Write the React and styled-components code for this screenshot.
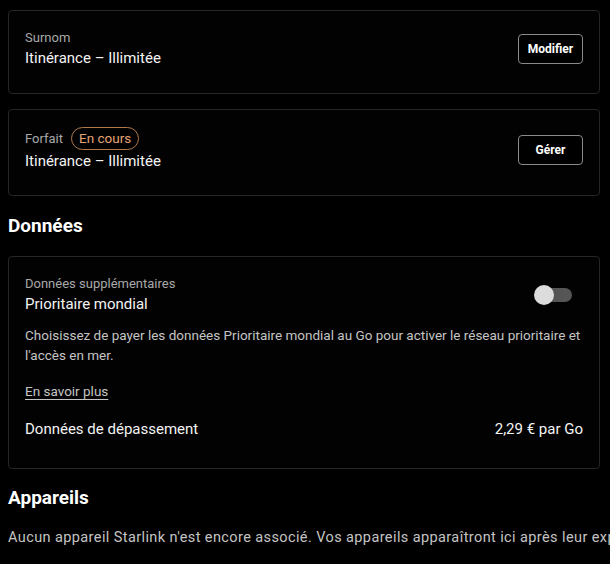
import React from 'react';
import styled, { createGlobalStyle } from 'styled-components';

const GlobalStyle = createGlobalStyle`
  html, body {
    margin: 0;
    padding: 0;
    background: #000;
  }
  body {
    font-family: Roboto, "Liberation Sans", sans-serif;
    color: #f2f2f2;
    overflow: hidden;
  }
`;

const Page = styled.div`
  width: 592px;
  padding: 10px 0 0 8px;
  display: flex;
  flex-direction: column;
`;

const Card = styled.div`
  border: 1px solid #262626;
  border-radius: 4px;
  background: #020202;
  padding: ${p => p.$pad || '16px'};
  margin: ${p => p.$m || '0 0 16px'};
`;

const Row = styled.div`
  display: flex;
  align-items: ${p => p.$align || 'center'};
  justify-content: space-between;
  min-height: ${p => p.$h || 'auto'};
  margin-top: ${p => p.$mt || '0'};
`;

const Stack = styled.div`
  display: flex;
  flex-direction: column;
`;

const Label = styled.div`
  display: flex;
  align-items: center;
  gap: 8px;
  font-size: 13px;
  color: #a8a8a8;
  min-height: ${p => p.$h || '18px'};
  line-height: 18px;
`;

const Value = styled.div`
  font-size: 15px;
  color: #f4f4f4;
  line-height: 22px;
`;

const Badge = styled.span`
  border: 1px solid #b07a4c;
  color: #e3a374;
  border-radius: 12px;
  padding: 2px 7px;
  font-size: 13.5px;
  line-height: 17px;
`;

const Button = styled.button`
  background: #000;
  border: 1px solid #8a8a8a;
  border-radius: 4px;
  color: #fff;
  font-family: inherit;
  font-weight: 700;
  font-size: 12px;
  height: 30px;
  width: 65px;
  padding: 0;
  margin-top: ${p => p.$mt || '0'};
`;

const Heading = styled.h2`
  margin: 0;
  font-size: 19px;
  font-weight: 700;
  color: #fff;
  line-height: 26px;
`;

const Toggle = styled.div`
  position: relative;
  width: 38px;
  height: 20px;
  margin-right: 11px;
  &::before {
    content: '';
    position: absolute;
    left: 6px;
    right: 0;
    top: 3px;
    height: 14px;
    border-radius: 7px;
    background: #555;
  }
  &::after {
    content: '';
    position: absolute;
    left: 0;
    top: 0;
    width: 20px;
    height: 20px;
    border-radius: 50%;
    background: #dcdcdc;
  }
`;

const Desc = styled.p`
  margin: 10px 0 0;
  font-size: 13.5px;
  line-height: 20px;
  color: #c4c4c4;
`;

const Link = styled.a`
  display: inline-block;
  margin-top: 16px;
  font-size: 13.5px;
  line-height: 20px;
  color: #c4c4c4;
  text-decoration: underline;
  text-underline-offset: 3px;
`;

const Body = styled.p`
  margin: 17px 0 0;
  font-size: 14.5px;
  letter-spacing: 0.4px;
  color: #c4c4c4;
  white-space: nowrap;
  line-height: 20px;
`;

export default function App() {
  return (
    <>
      <GlobalStyle />
      <Page>
        <Card $pad="18px 16px 24px" $m="0 0 15px">
          <Row $align="flex-start">
            <Stack>
              <Label>Surnom</Label>
              <Value>Itinérance – Illimitée</Value>
            </Stack>
            <Button $mt="5px">Modifier</Button>
          </Row>
        </Card>
        <Card $pad="17px 16px 23px" $m="0 0 17px">
          <Row $align="flex-start">
            <Stack>
              <Label $h="23px">Forfait <Badge>En cours</Badge></Label>
              <Value>Itinérance – Illimitée</Value>
            </Stack>
            <Button $mt="8px">Gérer</Button>
          </Row>
        </Card>
        <Heading>Données</Heading>
        <Card $pad="18px 16px 19px" $m="17px 0 16px">
          <Row>
            <Stack>
              <Label>Données supplémentaires</Label>
              <Value>Prioritaire mondial</Value>
            </Stack>
            <Toggle />
          </Row>
          <Desc>
            Choisissez de payer les données Prioritaire mondial au Go pour activer le réseau prioritaire et l'accès en mer.
          </Desc>
          <Link>En savoir plus</Link>
          <Row $h="40px" $mt="8px">
            <Value>Données de dépassement</Value>
            <Value>2,29 € par Go</Value>
          </Row>
        </Card>
        <Heading>Appareils</Heading>
        <Body>
          Aucun appareil Starlink n'est encore associé. Vos appareils apparaîtront ici après leur expédition.
        </Body>
      </Page>
    </>
  );
}
